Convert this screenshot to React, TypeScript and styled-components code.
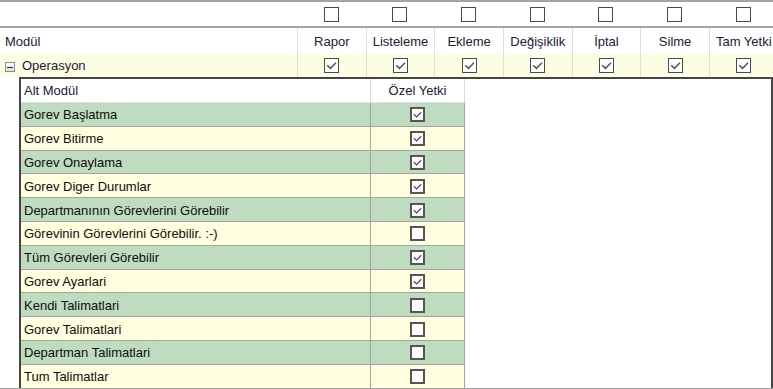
import React from 'react';
import styled, { createGlobalStyle } from 'styled-components';

const Global = createGlobalStyle`
  html, body { margin: 0; padding: 0; background: #fff; }
  body { font-family: "Liberation Sans", Arial, sans-serif; font-size: 13px; }
`;

const Frame = styled.div`
  width: 773px;
  height: 389px;
  box-sizing: border-box;
  border-top: 2px solid #a4a4a4;
  border-bottom: 1px solid #a4a4a4;
  display: flex;
  flex-direction: column;
  overflow: hidden;
  background: #fff;
`;

const ColRow = styled.div<{ $bg?: string; $h: number; $rule?: boolean }>`
  display: grid;
  grid-template-columns: 297px repeat(7, 68.67px);
  height: ${(p) => p.$h}px;
  flex: none;
  background: ${(p) => p.$bg ?? '#fff'};
  border-bottom: ${(p) => (p.$rule ? '2px solid #a4a4a4' : 'none')};
`;

const Cell = styled.div<{ $line?: boolean; $start?: boolean }>`
  display: flex;
  align-items: center;
  justify-content: ${(p) => (p.$start ? 'flex-start' : 'center')};
  gap: 7px;
  padding-left: ${(p) => (p.$start ? '5px' : '0')};
  box-sizing: border-box;
  border-left: ${(p) => (p.$line ? '1px solid #dedede' : 'none')};
  white-space: nowrap;
  overflow: hidden;
  color: #1a2038;
`;

const HeadText = styled.span`
  color: #1a2038;
`;

const Expander = styled.span`
  width: 10px;
  height: 10px;
  box-sizing: border-box;
  border: 1px solid #8e8e8e;
  background: linear-gradient(#ffffff, #dcdcdc);
  display: inline-flex;
  align-items: center;
  justify-content: center;
  margin-top: 3px;
  &::after {
    content: '';
    width: 6px;
    height: 1px;
    background: #2a2a2a;
  }
`;

const Box = styled.span<{ $thick?: boolean }>`
  width: 15px;
  height: 15px;
  box-sizing: border-box;
  border: ${(p) => (p.$thick ? '2px solid #555' : '1px solid #4a4a4a')};
  background: #fff;
  display: inline-flex;
  align-items: center;
  justify-content: center;
  flex: none;
`;

const Check = ({ checked, thick }: { checked?: boolean; thick?: boolean }) => (
  <Box $thick={thick}>
    {checked && (
      <svg width="100%" height="100%" viewBox="0 0 13 13">
        <path d="M2.2 6.2 L5.5 9.4 L10.9 3.8" fill="none" stroke="#505050" strokeWidth="1.5" />
      </svg>
    )}
  </Box>
);

const SubPanel = styled.div`
  flex: 1;
  min-height: 0;
  margin-left: 19px;
  border: 2px solid #454545;
  border-bottom: none;
  overflow: hidden;
  background: #fff;
`;

const SubGrid = styled.div`
  width: 444px;
  display: grid;
  grid-template-columns: 350px 94px;
`;

const SubHead = styled.div<{ $center?: boolean }>`
  height: 24px;
  box-sizing: border-box;
  display: flex;
  align-items: center;
  justify-content: ${(p) => (p.$center ? 'center' : 'flex-start')};
  padding-left: ${(p) => (p.$center ? '0' : '3px')};
  border-right: 1px solid #dadada;
  border-bottom: 1px solid #e2e2e2;
  color: #1a2038;
  background: #fff;
`;

const SubCell = styled.div<{ $green: boolean; $center?: boolean; $last?: boolean }>`
  height: 23.8px;
  box-sizing: border-box;
  display: flex;
  align-items: center;
  justify-content: ${(p) => (p.$center ? 'center' : 'flex-start')};
  padding-left: ${(p) => (p.$center ? '0' : '3px')};
  padding-top: 1px;
  background: ${(p) => (p.$green ? '#c0dcc0' : '#ffffe0')};
  border-right: 1px solid #a4a4a4;
  border-bottom: 1px solid ${(p) => (p.$last ? '#5a5a5a' : '#a4a4a4')};
  color: #0d0d0d;
  white-space: nowrap;
`;

const columns = ['Rapor', 'Listeleme', 'Ekleme', 'Değişiklik', 'İptal', 'Silme', 'Tam Yetki'];

const subRows: [string, boolean][] = [
  ['Gorev Başlatma', true],
  ['Gorev Bitirme', true],
  ['Gorev Onaylama', true],
  ['Gorev Diger Durumlar', true],
  ['Departmanının Görevlerini Görebilir', true],
  ['Görevinin Görevlerini Görebilir. :-)', false],
  ['Tüm Görevleri Görebilir', true],
  ['Gorev Ayarlari', true],
  ['Kendi Talimatlari', false],
  ['Gorev Talimatlari', false],
  ['Departman Talimatlari', false],
  ['Tum Talimatlar', false],
];

export default function App() {
  return (
    <>
      <Global />
      <Frame>
        <ColRow $h={24} $rule>
          <Cell />
          {columns.map((c) => (
            <Cell key={c}>
              <Check />
            </Cell>
          ))}
        </ColRow>
        <ColRow $h={26}>
          <Cell $start>
            <HeadText>Modül</HeadText>
          </Cell>
          {columns.map((c) => (
            <Cell key={c} $line>
              <HeadText>{c}</HeadText>
            </Cell>
          ))}
        </ColRow>
        <ColRow $h={23} $bg="#fdfde4">
          <Cell $start>
            <Expander />
            <HeadText>Operasyon</HeadText>
          </Cell>
          {columns.map((c) => (
            <Cell key={c} $line>
              <Check checked />
            </Cell>
          ))}
        </ColRow>
        <SubPanel>
          <SubGrid>
            <SubHead>Alt Modül</SubHead>
            <SubHead $center>Özel Yetki</SubHead>
            {subRows.map(([name, on], i) => (
              <React.Fragment key={name}>
                <SubCell $green={i % 2 === 0} $last={i === subRows.length - 1}>
                  {name}
                </SubCell>
                <SubCell $green={i % 2 === 0} $last={i === subRows.length - 1} $center>
                  <Check checked={on} thick />
                </SubCell>
              </React.Fragment>
            ))}
          </SubGrid>
        </SubPanel>
      </Frame>
    </>
  );
}
